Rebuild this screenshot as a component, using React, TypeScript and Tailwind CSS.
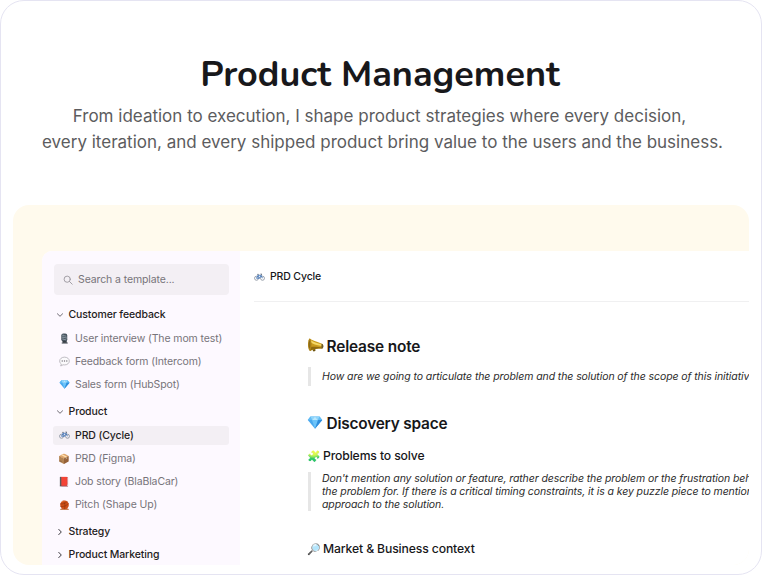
import React from "react";

type IconProps = { className?: string };

function Bike({ className = "" }: IconProps) {
  return (
    <svg viewBox="0 0 22 16" className={className} fill="none">
      <circle cx="5" cy="10.5" r="4" stroke="#7d8795" strokeWidth="1.5" />
      <circle cx="17" cy="10.5" r="4" stroke="#7d8795" strokeWidth="1.5" />
      <path d="M5 10.5 8 4.5h6l3 6M8 4.5l3 6 3.5-5.5M5 10.5h6" stroke="#3f74b8" strokeWidth="1.7" />
      <path d="M6.3 2.8h3.2M13 2h2.4l-.9 2.6" stroke="#4a5563" strokeWidth="1.4" />
    </svg>
  );
}

function Mic({ className = "" }: IconProps) {
  return (
    <svg viewBox="0 0 16 24" className={className}>
      <path d="M2 14c0 5 3 6 6 6s6-2 6-6" fill="#5c6770" />
      <rect x="1" y="1" width="13" height="17" rx="4.5" fill="#46525c" />
      <path d="M3 5l9 2M2.500 9l11 2M3 13l9 2" stroke="#a9b6c0" strokeWidth="1.400" />
      <path d="M5 2v13" stroke="#7f909c" strokeWidth="1" />
      <path d="M4 18h9v3H4z" fill="#2c343a" />
      <path d="M2 20.500h13V23H2z" fill="#343d44" />
    </svg>
  );
}

function Bubble({ className = "" }: IconProps) {
  return (
    <svg viewBox="0 0 24 24" className={className}>
      <path
        d="M12 2.500c6 0 10.500 3.600 10.500 8.500S18 19.500 12 19.500c-1.200 0-2.300-.1-3.300-.4-1.500 1.300-3.300 2.300-5.200 2.400 1-1.200 1.500-2.500 1.500-4C2.800 15.900 1.500 13.600 1.500 11 1.500 6.100 6 2.500 12 2.500z"
        fill="#fbfafc"
        stroke="#aaa7ae"
        strokeWidth="1.600"
      />
      <circle cx="7" cy="11" r="1.500" fill="#77747c" />
      <circle cx="12" cy="11" r="1.500" fill="#77747c" />
      <circle cx="17" cy="11" r="1.500" fill="#77747c" />
    </svg>
  );
}

function Diamond({ className = "" }: IconProps) {
  return (
    <svg viewBox="0 0 30 26" className={className}>
      <path d="M6 1h18l5.500 7L15 25.500.5 8z" fill="#4aa9ee" />
      <path d="M6 1 .5 8H9zM24 1l5.500 7H21z" fill="#62bdf5" />
      <path d="M6 1h9L9 8zM24 1h-9l6 7z" fill="#8fd6fb" />
      <path d="M15 1 9 8h12z" fill="#b9e8fe" />
      <path d="M9 8h12l-6 17.500z" fill="#6cc4fa" />
      <path d="M21 8h8.500L15 25.500z" fill="#2f8edc" />
    </svg>
  );
}

function Ball({ className = "" }: IconProps) {
  return (
    <svg viewBox="0 0 24 24" className={className} fill="none">
      <path d="M2 22c2-4 5-5 10-5s8 1 10 5z" fill="#c9845c" />
      <circle cx="12" cy="10.5" r="9.5" fill="#cf4f17" />
      <path d="M3 8c6 1 12 0 15-5M3 14c7 1 14-1 18-7M9 1.5c4 5 5 11 3 18" stroke="#8a330f" strokeWidth="1.200" />
      <path d="M6 4.5c2-2 4-2 6-2" stroke="#f28b4a" strokeWidth="1.6" />
    </svg>
  );
}

function Megaphone({ className = "" }: IconProps) {
  return (
    <svg viewBox="0 0 32 28" className={className}>
      <path d="M9 20l2 6c.5 1.500 5 .8 5-.8L15 19z" fill="#6e5410" />
      <path d="M4 1c5 3 14 6 26 11 2 1 2 8 0 9-10 0-18 1-25 5z" fill="#c99a1c" />
      <path d="M5 3c6 5 14 7 24 10l-1 3C18 14 10 12 5 8z" fill="#f5d865" />
      <path d="M5 18c8-1 16-1 24 1l-1 2c-9 0-17 1-24 5z" fill="#8f6a10" />
      <ellipse cx="4.500" cy="13" rx="3.500" ry="12" fill="#b38718" />
      <ellipse cx="4" cy="13" rx="1.500" ry="8" fill="#8a6a1a" />
      <path d="M28 11.500c5 1 5 9 0 10z" fill="#64572f" />
    </svg>
  );
}

function Chevron({ open }: { open?: boolean }) {
  return (
    <svg viewBox="0 0 8 8" className="h-2 w-2" fill="none">
      <path
        d={open ? "M1.400 2.800 4 5.300l2.600-2.500" : "M2.800 1.400 5.300 4 2.800 6.600"}
        stroke={open ? "#6f6c74" : "#3a383e"}
        strokeWidth="1"
        strokeLinecap="round"
        strokeLinejoin="round"
      />
    </svg>
  );
}

function Emoji({ children }: { children: string }) {
  return <span className="text-[9.500px] leading-none tracking-normal font-['Noto_Color_Emoji',sans-serif]">{children}</span>;
}

function Group({ title, open, className }: { title: string; open?: boolean; className: string }) {
  return (
    <div className={`flex items-center pl-[1.500px] font-medium text-[#1f1d22] ${className}`}>
      <div className="flex w-[13px]">
        <Chevron open={open} />
      </div>
      {title}
    </div>
  );
}

function Item({ icon, label, active }: { icon: React.ReactNode; label: string; active?: boolean }) {
  return (
    <div className="flex h-[23.200px] items-center">
      <div
        className={`-ml-px flex h-[19px] w-44 items-center rounded-[3px] pl-[5px] ${
          active ? "bg-[#f3eff4] font-medium text-[#1f1d22]" : "text-[#77747a]"
        }`}
      >
        <div className="flex w-[17px] shrink-0 items-center justify-center pr-[5px]">{icon}</div>
        <span className="whitespace-nowrap">{label}</span>
      </div>
    </div>
  );
}

function Quote({ lines, className }: { lines: string[]; className: string }) {
  return (
    <div
      className={`flex items-center border-l-[3px] border-[#e6e6e6] pl-[11px] text-[10.500px] leading-[13px] tracking-[-0.090px] text-[#2b2b2b] italic ${className}`}
    >
      <div>
        {lines.map((line) => (
          <div key={line} className="whitespace-nowrap">
            {line}
          </div>
        ))}
      </div>
    </div>
  );
}

export default function App() {
  return (
    <div className="h-[575px] w-[762px] overflow-hidden rounded-[24px] border border-[#e5e4f2] bg-white pl-3 font-[Inter,sans-serif]">
      <header className="-ml-3 flex h-[204px] flex-col items-center pt-[49px]">
        <h1 className="pr-[2px] font-[Nunito,sans-serif] text-[36px] leading-[50px] font-bold text-[#18181b]">Product Management</h1>
        <p className="mt-[3px] pl-[3px] text-center text-[17px] leading-[26px] whitespace-nowrap text-[#5c5c5e]">
          <span className="block -translate-x-[3px]">From ideation to execution, I shape product strategies where every decision,</span>
          every iteration, and every shipped product bring value to the users and the business.
        </p>
      </header>

      <section className="h-[360px] w-[736px] overflow-hidden rounded-[16px] bg-[#fffaed] pt-[46px] pl-[29px]">
        <div className="flex h-[314px] overflow-hidden rounded-tl-[10px] bg-white">
          <aside className="w-[198px] shrink-0 bg-[#fdf9ff] pt-[13px] pl-3 text-[10.500px] tracking-[-0.110px]">
            <div className="flex h-[31px] w-[175px] items-center rounded-[4px] bg-[#f3eff4] pl-[9px] text-[#77747a]">
              <svg viewBox="0 0 10 10" className="mr-[5px] h-2.5 w-2.5" fill="none" stroke="#9a969d" strokeWidth="0.9" strokeLinecap="round">
                <circle cx="4.200" cy="4.200" r="3.100" />
                <path d="m6.500 6.500 2.700 2.700" />
              </svg>
              Search a template...
            </div>
            <Group title="Customer feedback" open className="mt-2 h-6" />
            <Item icon={<Mic className="h-[11px] w-[9px]" />} label="User interview (The mom test)" />
            <Item icon={<Bubble className="h-[11px] w-[11px]" />} label="Feedback form (Intercom)" />
            <Item icon={<Diamond className="h-[9px] w-[11px]" />} label="Sales form (HubSpot)" />
            <Group title="Product" open className="mt-[3.300px] h-6" />
            <Item icon={<Bike className="h-2 w-[11px]" />} label="PRD (Cycle)" active />
            <Item icon={<Emoji>📦</Emoji>} label="PRD (Figma)" />
            <Item icon={<Emoji>📕</Emoji>} label="Job story (BlaBlaCar)" />
            <Item icon={<Ball className="h-[11px] w-[11px]" />} label="Pitch (Shape Up)" />
            <Group title="Strategy" className="mt-[3px] h-6" />
            <Group title="Product Marketing" className="h-[23px]" />
          </aside>

          <main className="min-w-0 flex-1 overflow-hidden pl-[14px] text-[#17171a]">
            <div className="flex h-[51px] items-center gap-[5px] border-b border-[#f0f0f1] pt-px text-[10.500px] font-medium tracking-[-0.140px]">
              <Bike className="h-2 w-[11px]" />
              PRD Cycle
            </div>
            <div className="pl-[54px]">
              <h2 className="mt-[34px] flex h-[22px] items-center text-[15.400px] font-semibold tracking-[-0.160px]">
                <Megaphone className="mr-[2.500px] -mt-1 -ml-px h-[14px] w-[17px]" />
                Release note
              </h2>
              <Quote className="mt-[9px] h-[19px]" lines={["How are we going to articulate the problem and the solution of the scope of this initiative?"]} />
              <h2 className="mt-[27px] flex h-[22px] items-center text-[15.400px] font-semibold tracking-[-0.200px]">
                <Diamond className="mr-[3.500px] -mt-[3px] -ml-px h-[13px] w-4" />
                Discovery space
              </h2>
              <h3 className="mt-[11px] flex h-5 items-center text-[12.200px] font-medium tracking-[-0.130px]">
                <span className="-ml-px w-4 text-[11px] leading-none tracking-normal brightness-125 saturate-75 font-['Noto_Color_Emoji',sans-serif]">🧩</span>
                Problems to solve
              </h3>
              <Quote
                className="mt-[6px] h-[39px]"
                lines={[
                  "Don't mention any solution or feature, rather describe the problem or the frustration behind",
                  "the problem for. If there is a critical timing constraints, it is a key puzzle piece to mention",
                  "approach to the solution.",
                ]}
              />
              <h3 className="mt-[28px] flex h-5 items-center text-[12.200px] font-medium tracking-[-0.130px]">
                <span className="-ml-px w-4 text-[11px] leading-none tracking-normal font-['Noto_Color_Emoji',sans-serif]">🔎</span>
                Market &amp; Business context
              </h3>
            </div>
          </main>
        </div>
      </section>
    </div>
  );
}
